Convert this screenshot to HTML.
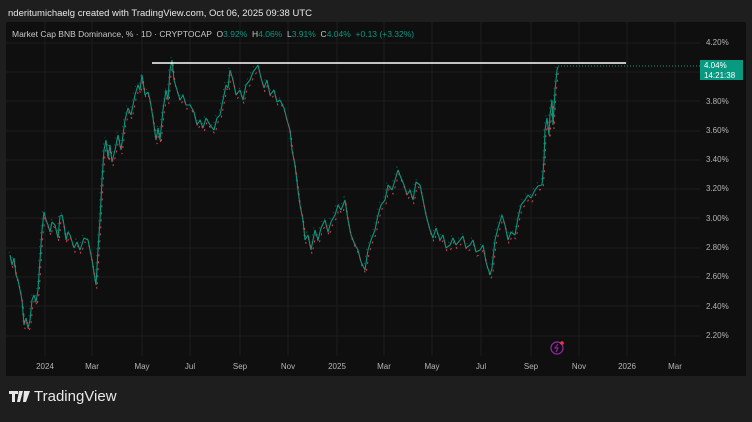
<!DOCTYPE html>
<html><head><meta charset="utf-8"><style>
body{margin:0;width:752px;height:422px;background:#1e1e1e;overflow:hidden;font-family:"Liberation Sans",sans-serif;position:relative}
.hdr{position:absolute;left:8px;top:8px;font-size:9.5px;color:#e8e8e8}
.panel{position:absolute;left:6px;top:22px;width:740px;height:354px;background:#0f0f0f}
.leg{position:absolute;left:12px;top:29px;font-size:8.5px;color:#c8c8c8;white-space:nowrap}
.g{color:#089981}
.ax{position:absolute;font-size:8px;color:#b5b5b5}
.tx{position:absolute;top:362px;width:24px;margin-left:-12px;text-align:center;font-size:8px;color:#b5b5b5}
.tag{position:absolute;left:700px;top:60px;width:43px;height:20px;background:#089981;color:#fff;font-size:8px;line-height:9.5px;padding-left:4px;box-sizing:border-box;padding-top:1px}
.logo{position:absolute;left:34px;top:388px;font-size:15px;color:#e8e8e8}
</style></head><body>
<div class="hdr">nderitumichaelg created with TradingView.com, Oct 06, 2025 09:38 UTC</div>
<div class="panel"></div>
<svg width="752" height="422" style="position:absolute;left:0;top:0">
<defs>
<path id="p" d="M10 255 L12 265 L14 258 L16 275 L18 280 L20 290 L22 300 L24 325 L26 318 L28 328 L30 320 L32 300 L34 295 L36 302 L38 290 L40 260 L42 230 L44 212 L46 220 L48 225 L50 232 L52 222 L55 225 L58 238 L60 216 L62 215 L64 225 L66 240 L68 232 L70 235 L74 248 L77 242 L80 250 L84 238 L88 240 L92 260 L96 285 L98 250 L100 220 L102 180 L104 150 L106 140 L108 158 L110 145 L112 162 L115 150 L118 135 L121 150 L125 120 L128 108 L131 115 L135 95 L138 85 L140 90 L142 75 L145 95 L148 92 L150 100 L153 118 L156 140 L158 128 L160 140 L163 110 L166 90 L168 100 L170 70 L172 60 L174 80 L177 90 L180 100 L183 95 L186 105 L190 105 L194 112 L197 125 L200 120 L203 128 L206 118 L210 125 L214 130 L217 118 L220 115 L223 100 L226 85 L228 88 L230 70 L233 80 L236 95 L240 90 L243 100 L246 85 L250 80 L253 72 L256 68 L258 65 L261 78 L264 88 L267 80 L270 95 L274 90 L277 102 L280 100 L284 108 L287 120 L290 130 L292 150 L295 165 L298 190 L300 205 L303 220 L305 240 L308 235 L311 250 L315 230 L318 240 L321 228 L325 220 L328 232 L331 222 L335 215 L338 205 L341 210 L345 200 L348 220 L351 235 L355 245 L358 250 L361 262 L365 270 L368 250 L371 240 L375 230 L378 215 L381 205 L385 200 L388 185 L392 190 L395 180 L398 170 L401 178 L404 185 L407 195 L410 190 L413 200 L416 182 L420 185 L423 200 L426 215 L430 230 L433 238 L436 228 L440 240 L443 235 L446 248 L450 245 L453 238 L456 245 L460 240 L463 236 L466 248 L470 245 L473 240 L476 252 L480 250 L483 245 L486 262 L490 275 L492 268 L495 240 L498 228 L502 215 L505 225 L508 240 L511 232 L515 235 L518 218 L521 205 L525 200 L528 195 L531 198 L535 190 L538 186 L542 185 L544 160 L545 130 L547 118 L549 135 L550 115 L552 100 L553 125 L555 90 L556 80 L557 70 L558 67"/>
</defs>
<g stroke="#1c1c1c">
<line x1="45" y1="22" x2="45" y2="356"/><line x1="92" y1="22" x2="92" y2="356"/><line x1="142" y1="22" x2="142" y2="356"/><line x1="190" y1="22" x2="190" y2="356"/><line x1="240" y1="22" x2="240" y2="356"/><line x1="288" y1="22" x2="288" y2="356"/><line x1="337" y1="22" x2="337" y2="356"/><line x1="384" y1="22" x2="384" y2="356"/><line x1="432" y1="22" x2="432" y2="356"/><line x1="481" y1="22" x2="481" y2="356"/><line x1="531" y1="22" x2="531" y2="356"/><line x1="579" y1="22" x2="579" y2="356"/><line x1="627" y1="22" x2="627" y2="356"/><line x1="675" y1="22" x2="675" y2="356"/>
<line x1="6" y1="43" x2="700" y2="43"/><line x1="6" y1="72" x2="700" y2="72"/><line x1="6" y1="101" x2="700" y2="101"/><line x1="6" y1="131" x2="700" y2="131"/><line x1="6" y1="160" x2="700" y2="160"/><line x1="6" y1="189" x2="700" y2="189"/><line x1="6" y1="218" x2="700" y2="218"/><line x1="6" y1="248" x2="700" y2="248"/><line x1="6" y1="277" x2="700" y2="277"/><line x1="6" y1="306" x2="700" y2="306"/><line x1="6" y1="336" x2="700" y2="336"/>
</g>
<use href="#p" fill="none" stroke="#089981" stroke-width="1.1" stroke-linejoin="bevel"/>
<use href="#p" transform="translate(1,4)" fill="none" stroke="#e0404e" stroke-width="1" stroke-dasharray="2,5"/>
<use href="#p" transform="translate(-1,-3)" fill="none" stroke="#089981" stroke-width="0.8" stroke-dasharray="1,6" opacity="0.8"/>
<line x1="152" y1="63" x2="626" y2="63" stroke="#fff" stroke-width="1.5"/>
<line x1="558" y1="66" x2="700" y2="66" stroke="#089981" stroke-dasharray="1,2"/>
<circle cx="557" cy="348" r="6" fill="none" stroke="#9c27b0" stroke-width="1.2"/>
<path d="M558 344l-3 4h3l-2 4" fill="none" stroke="#9c27b0"/>
<circle cx="562" cy="343" r="1.8" fill="#f23645"/>
<path d="M9 391h9v3h-3v8h-3v-8h-3z M19 391h4l-3 11h-3z M24 391h6l-4 11h-3z" fill="#e8e8e8"/>
</svg>
<div class="leg">Market Cap BNB Dominance, % · 1D · CRYPTOCAP &nbsp;O<span class="g">3.92%</span> &nbsp;H<span class="g">4.06%</span> &nbsp;L<span class="g">3.91%</span> &nbsp;C<span class="g">4.04%</span> &nbsp;<span class="g">+0.13 (+3.32%)</span></div>
<div class="ax" style="left:706px;top:38px">4.20%</div>
<div class="ax" style="left:706px;top:97px">3.80%</div>
<div class="ax" style="left:706px;top:126px">3.60%</div>
<div class="ax" style="left:706px;top:155px">3.40%</div>
<div class="ax" style="left:706px;top:184px">3.20%</div>
<div class="ax" style="left:706px;top:214px">3.00%</div>
<div class="ax" style="left:706px;top:243px">2.80%</div>
<div class="ax" style="left:706px;top:272px">2.60%</div>
<div class="ax" style="left:706px;top:302px">2.40%</div>
<div class="ax" style="left:706px;top:331px">2.20%</div>
<div class="tag">4.04%<br>14:21:38</div>
<div class="tx" style="left:45px">2024</div><div class="tx" style="left:92px">Mar</div><div class="tx" style="left:142px">May</div><div class="tx" style="left:190px">Jul</div><div class="tx" style="left:240px">Sep</div><div class="tx" style="left:288px">Nov</div><div class="tx" style="left:337px">2025</div><div class="tx" style="left:384px">Mar</div><div class="tx" style="left:432px">May</div><div class="tx" style="left:481px">Jul</div><div class="tx" style="left:531px">Sep</div><div class="tx" style="left:579px">Nov</div><div class="tx" style="left:627px">2026</div><div class="tx" style="left:675px">Mar</div>
<div class="logo">TradingView</div>
</body></html>
